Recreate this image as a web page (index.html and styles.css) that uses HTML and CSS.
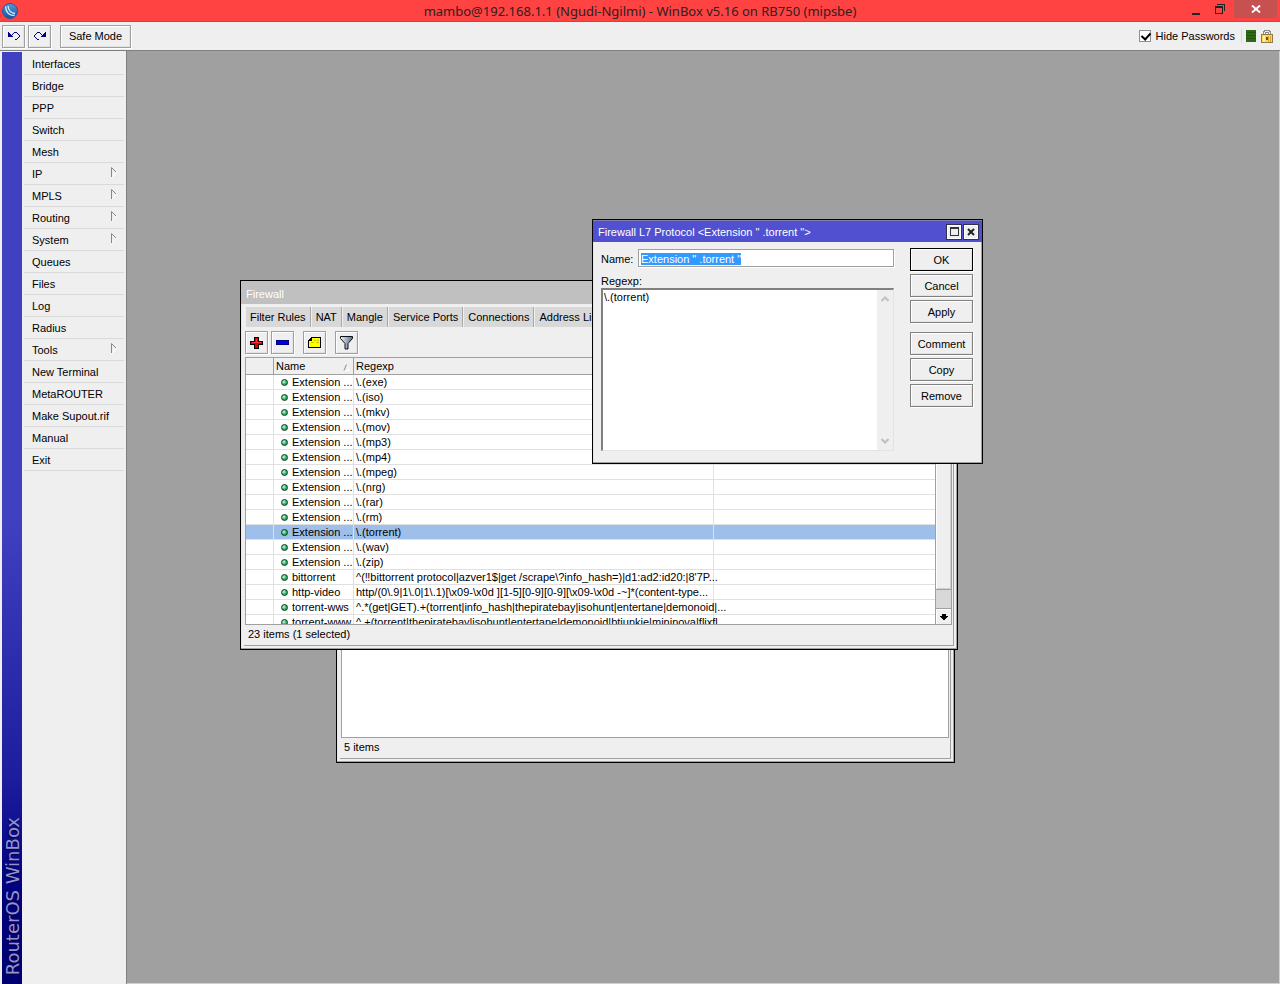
FILE: index.html
```html
<!DOCTYPE html>
<html lang="en">
<head>
<meta charset="utf-8">
<title>WinBox</title>
<link rel="stylesheet" href="styles.css">
<script src="app.js" defer></script>
</head>
<body>
<header class="titlebar">
  <svg class="logo" width="16" height="16" viewBox="0 0 16 16"><defs><linearGradient id="ball" x1="0" y1="0" x2="0" y2="1"><stop offset="0" stop-color="#5599dc"/><stop offset="1" stop-color="#1552a2"/></linearGradient></defs><circle cx="8" cy="8" r="7.5" fill="url(#ball)" stroke="#2b5797"/><path d="M3.500 3.500C4 9 7 12.500 12.500 12.500M6 3C6.500 7.500 9 10 13 10.500" fill="none" stroke="#d5f2ff" stroke-width="1.300"/></svg>
  <h1 class="title">mambo@192.168.1.1 (Ngudi-Ngilmi) - WinBox v5.16 on RB750 (mipsbe)</h1>
  <div class="controls">
    <button class="control" aria-label="Minimize"><svg width="10" height="12" viewBox="0 0 10 12"><path d="M1 10h8v2H1z" fill="#222"/></svg></button>
    <button class="control" aria-label="Restore"><svg width="12" height="12" viewBox="0 0 12 12" shape-rendering="crispEdges"><path d="M3 1.500h7.500V8M1 3.500h7.500v7H1.500V3" fill="none" stroke="#222"/><path d="M1 3h8v2H1z" fill="#222"/></svg></button>
    <button class="control control-close" aria-label="Close"><svg width="10" height="8" viewBox="0 0 10 8"><path d="M1 .5l8 7M9 .5l-8 7" stroke="#fff" stroke-width="1.900"/></svg></button>
  </div>
</header>
<div class="toolbar">
  <button class="btn btn-icon" aria-label="Undo"><svg width="12" height="10" viewBox="0 0 12 10" shape-rendering="crispEdges"><path d="M0 1h1v1h1v1h1v1h1V3h1V2h1V1h3v1h1v1h1v1h1v2h-1v1h-1v1H9v1H7V8h2V7h1V6h1V4h-1V3H9V2H6v1H5v1H4v1h1v1H0z" fill="#000080"/></svg></button>
  <button class="btn btn-icon" aria-label="Redo"><svg width="12" height="10" viewBox="0 0 12 10" shape-rendering="crispEdges"><path transform="matrix(-1 0 0 1 12 0)" d="M0 1h1v1h1v1h1v1h1V3h1V2h1V1h3v1h1v1h1v1h1v2h-1v1h-1v1H9v1H7V8h2V7h1V6h1V4h-1V3H9V2H6v1H5v1H4v1h1v1H0z" fill="#000080"/></svg></button>
  <button class="btn btn-safe">Safe Mode</button>
  <label class="hide-pass"><input type="checkbox" class="check" checked>Hide Passwords</label>
  <div class="indicators">
    <svg width="10" height="12" viewBox="0 0 10 12" shape-rendering="crispEdges"><path d="M0 0h10v12H0z" fill="#2d6a12"/><path d="M0 2.500h10M0 5.500h10M0 8.500h10" stroke="#225510"/></svg>
    <svg width="12" height="14" viewBox="0 0 12 14" shape-rendering="crispEdges"><path d="M2.500 6V2.500h1v-1h5v1h1V6M4.500 6V3.500h3V6" fill="none" stroke="#8d8d8d"/><path d="M.5 5.500h11v8H.5z" fill="#fbd94a" stroke="#8d7d48"/><path d="M2 7h2v6H2z" fill="#fff0a0"/><path d="M7.500 7v6M9.500 7v6" stroke="#d8a72c"/><path d="M5 8h2v3H5z" fill="#655020"/></svg>
  </div>
</div>
<div class="main">
  <aside class="brand"><span class="brand-text">RouterOS WinBox</span></aside>
  <nav class="menu">
    <a class="item" href="#">Interfaces</a>
    <a class="item" href="#">Bridge</a>
    <a class="item" href="#">PPP</a>
    <a class="item" href="#">Switch</a>
    <a class="item" href="#">Mesh</a>
    <a class="item" href="#">IP<svg class="sub" width="6" height="11" viewBox="0 0 6 11"><path d="M5 5v1L1 10" stroke="#fff" fill="none"/><path d="M.5 10V.5L5 5" stroke="#888" fill="none"/></svg></a>
    <a class="item" href="#">MPLS<svg class="sub" width="6" height="11" viewBox="0 0 6 11"><path d="M5 5v1L1 10" stroke="#fff" fill="none"/><path d="M.5 10V.5L5 5" stroke="#888" fill="none"/></svg></a>
    <a class="item" href="#">Routing<svg class="sub" width="6" height="11" viewBox="0 0 6 11"><path d="M5 5v1L1 10" stroke="#fff" fill="none"/><path d="M.5 10V.5L5 5" stroke="#888" fill="none"/></svg></a>
    <a class="item" href="#">System<svg class="sub" width="6" height="11" viewBox="0 0 6 11"><path d="M5 5v1L1 10" stroke="#fff" fill="none"/><path d="M.5 10V.5L5 5" stroke="#888" fill="none"/></svg></a>
    <a class="item" href="#">Queues</a>
    <a class="item" href="#">Files</a>
    <a class="item" href="#">Log</a>
    <a class="item" href="#">Radius</a>
    <a class="item" href="#">Tools<svg class="sub" width="6" height="11" viewBox="0 0 6 11"><path d="M5 5v1L1 10" stroke="#fff" fill="none"/><path d="M.5 10V.5L5 5" stroke="#888" fill="none"/></svg></a>
    <a class="item" href="#">New Terminal</a>
    <a class="item" href="#">MetaROUTER</a>
    <a class="item" href="#">Make Supout.rif</a>
    <a class="item" href="#">Manual</a>
    <a class="item" href="#">Exit</a>
  </nav>
  <main class="desktop">
    <section class="window win-back">
      <div class="frame">
        <div class="back-list"></div>
        <div class="status">5 items</div>
      </div>
    </section>

    <section class="window win-firewall">
      <h2 class="caption caption-idle">Firewall</h2>
      <div class="frame">
        <div class="tabs">
          <button class="tab">Filter Rules</button><button class="tab">NAT</button><button class="tab">Mangle</button><button class="tab">Service Ports</button><button class="tab">Connections</button><button class="tab">Address Lists</button>
        </div>
        <div class="tools">
          <button class="btn btn-icon" aria-label="Add"><svg width="13" height="12" viewBox="0 0 13 12" shape-rendering="crispEdges"><path d="M4.500.5h4v4h4v3h-4v4h-4v-4h-4v-3h4z" fill="#e00000" stroke="#000"/><path d="M6 2h1v3h4v1H2V5h4z" fill="#ff3030"/></svg></button>
          <button class="btn btn-icon" aria-label="Remove entry"><svg width="13" height="5" viewBox="0 0 13 5" shape-rendering="crispEdges"><path d="M.5.5h12v4H.5z" fill="#0000f0" stroke="#000080"/></svg></button>
          <button class="btn btn-icon gap-left" aria-label="Comment entry"><svg width="13" height="11" viewBox="0 0 13 11" shape-rendering="crispEdges"><path d="M3.500.5h9v10H.5v-7h3z" fill="#ffff00" stroke="#000"/><path d="M0 3h1V2h1V1h1V0h1v4H0z" fill="#000"/><path d="M6 3.500h2M9 3.500h2M3 5.500h3M8 5.500h3" stroke="#c8c800"/></svg></button>
          <button class="btn btn-icon gap-left" aria-label="Filter"><svg width="13" height="14" viewBox="0 0 13 14"><defs><linearGradient id="fun"><stop offset="0" stop-color="#eef5ff"/><stop offset="1" stop-color="#51678a"/></linearGradient></defs><path d="M.5.5h12v2L8 7.500v5.500H5V7.500L.5 2.500z" fill="url(#fun)" stroke="#111"/></svg></button>
        </div>
        <div class="grid">
          <div class="grid-view">
            <table class="rules">
              <colgroup><col class="c-flag"><col class="c-name"><col class="c-regexp"><col></colgroup>
              <thead><tr><th></th><th>Name<svg class="sort" width="7" height="7" viewBox="0 0 7 7"><path d="M3 .5L6 6.500H1" stroke="#fff" fill="none"/><path d="M1 6.500L3.500.5" stroke="#888" fill="none"/></svg></th><th>Regexp</th><th></th></tr></thead>
              <tbody>
                <tr><td></td><td><i class="dot"></i>Extension ...</td><td>\.(exe)</td><td></td></tr>
                <tr><td></td><td><i class="dot"></i>Extension ...</td><td>\.(iso)</td><td></td></tr>
                <tr><td></td><td><i class="dot"></i>Extension ...</td><td>\.(mkv)</td><td></td></tr>
                <tr><td></td><td><i class="dot"></i>Extension ...</td><td>\.(mov)</td><td></td></tr>
                <tr><td></td><td><i class="dot"></i>Extension ...</td><td>\.(mp3)</td><td></td></tr>
                <tr><td></td><td><i class="dot"></i>Extension ...</td><td>\.(mp4)</td><td></td></tr>
                <tr><td></td><td><i class="dot"></i>Extension ...</td><td>\.(mpeg)</td><td></td></tr>
                <tr><td></td><td><i class="dot"></i>Extension ...</td><td>\.(nrg)</td><td></td></tr>
                <tr><td></td><td><i class="dot"></i>Extension ...</td><td>\.(rar)</td><td></td></tr>
                <tr><td></td><td><i class="dot"></i>Extension ...</td><td>\.(rm)</td><td></td></tr>
                <tr class="selected"><td></td><td><i class="dot"></i>Extension ...</td><td>\.(torrent)</td><td></td></tr>
                <tr><td></td><td><i class="dot"></i>Extension ...</td><td>\.(wav)</td><td></td></tr>
                <tr><td></td><td><i class="dot"></i>Extension ...</td><td>\.(zip)</td><td></td></tr>
                <tr><td></td><td><i class="dot"></i>bittorrent</td><td>^(‼bittorrent protocol|azver1$|get /scrape\?info_hash=)|d1:ad2:id20:|8'7P...</td><td></td></tr>
                <tr><td></td><td><i class="dot"></i>http-video</td><td>http/(0\.9|1\.0|1\.1)[\x09-\x0d ][1-5][0-9][0-9][\x09-\x0d -~]*(content-type...</td><td></td></tr>
                <tr><td></td><td><i class="dot"></i>torrent-wws</td><td>^.*(get|GET).+(torrent|info_hash|thepiratebay|isohunt|entertane|demonoid|...</td><td></td></tr>
                <tr><td></td><td><i class="dot"></i>torrent-www</td><td>^.+(torrent|thepiratebay|isohunt|entertane|demonoid|btjunkie|mininova|flixfl</td><td></td></tr>
              </tbody>
            </table>
          </div>
          <div class="scroll">
            <div class="thumb"></div>
            <div class="track"></div>
            <button class="arrow" aria-label="Scroll down"><svg width="8" height="6" viewBox="0 0 8 6" shape-rendering="crispEdges"><path d="M2 0h4v2h2v1H7v1H6v1H5v1H3V5H2V4H1V3H0V2h2z"/></svg></button>
          </div>
        </div>
        <div class="status">23 items (1 selected)</div>
      </div>
    </section>

    <section class="window win-dialog">
      <div class="caption caption-active">
        <h2 class="caption-text">Firewall L7 Protocol &lt;Extension " .torrent "&gt;</h2>
        <button class="cap-btn" aria-label="Maximize dialog"><svg width="9" height="9" viewBox="0 0 9 9" shape-rendering="crispEdges"><path d="M.5.5h8v8h-8zM0 1.500h9" fill="none" stroke="#333"/></svg></button>
        <button class="cap-btn" aria-label="Close dialog"><svg width="8" height="8" viewBox="0 0 8 8"><path d="M1 1l6 6M7 1L1 7" stroke="#222" stroke-width="2"/></svg></button>
      </div>
      <form class="dialog">
        <div class="fields">
          <div class="name-row"><label class="name-label" for="name">Name:</label><input id="name" class="text" type="text" value='Extension " .torrent "'></div>
          <label class="regexp-label" for="regexp">Regexp:</label>
          <div class="area-box">
            <textarea id="regexp" class="area">\.(torrent)</textarea>
            <div class="area-scroll">
              <svg width="8" height="6" viewBox="0 0 8 6"><path d="M.5 5L4 1.500 7.500 5" fill="none" stroke="#c0c0c0" stroke-width="2"/></svg>
              <svg width="8" height="6" viewBox="0 0 8 6"><path d="M.5 1L4 4.500 7.500 1" fill="none" stroke="#c0c0c0" stroke-width="2"/></svg>
            </div>
          </div>
        </div>
        <div class="actions">
          <button type="button" class="btn action default">OK</button>
          <button type="button" class="btn action">Cancel</button>
          <button type="button" class="btn action">Apply</button>
          <button type="button" class="btn action second">Comment</button>
          <button type="button" class="btn action">Copy</button>
          <button type="button" class="btn action">Remove</button>
        </div>
      </form>
    </section>
  </main>
</div>
</body>
</html>
```

FILE: styles.css
```css
* { box-sizing: border-box; }
body {
  margin: 0;
  height: 100vh;
  display: flex;
  flex-direction: column;
  overflow: hidden;
  background: #efefef;
  color: #000;
  font: 11px/14px "Liberation Sans", Arial, sans-serif;
}
button, input, textarea { font: inherit; color: inherit; margin: 0; }
button { padding: 0; border: 0; background: none; display: flex; align-items: center; justify-content: center; }
h1, h2 { margin: 0; font-weight: normal; font-size: inherit; }
svg { display: block; flex: none; }

.titlebar {
  display: grid;
  grid-template-columns: 1fr auto 1fr;
  height: 22px;
  flex: none;
  background: #ff4343;
  border-bottom: 1px solid #e03a3a;
}
.logo { margin: 3px 2px; }
.title { font: 13px/22px "Noto Sans", "Open Sans", sans-serif; color: #2c2020; white-space: nowrap; }
.controls { display: flex; justify-content: flex-end; padding-right: 3px; }
.control { width: 24px; height: 18px; }
.control-close { width: 43px; background: #c75050; margin-left: 2px; }

.toolbar {
  display: flex;
  align-items: center;
  height: 29px;
  flex: none;
  padding: 0 7px 0 2px;
  border-bottom: 1px solid #808080;
}
.btn {
  height: 23px;
  border: 1px solid #a0a0a0;
  background: #efefef;
  box-shadow: 1px 1px #fff, inset 1px 1px #fff, inset -1px -1px #e3e3e3;
}
.btn-icon { width: 23px; margin-right: 3px; }
.btn-safe { width: 71px; margin-left: 6px; }
.hide-pass { display: flex; align-items: center; gap: 5px; margin-left: auto; }
.check {
  appearance: none;
  width: 12px;
  height: 12px;
  margin: 0;
  border: 1px solid #909090;
  background: #fff;
}
.check:checked::before {
  content: "";
  display: block;
  width: 4px;
  height: 7px;
  margin: 0 0 0 3px;
  border: solid #000;
  border-width: 0 2px 2px 0;
  transform: rotate(42deg);
}
.indicators { display: flex; align-items: center; gap: 5px; margin-left: 6px; padding-left: 4px; border-left: 1px solid #d8d8d8; }

.main { flex: 1; display: flex; min-height: 0; }
.brand {
  width: 20px;
  margin: 1px 0 0 2px;
  display: flex;
  align-items: flex-end;
  justify-content: flex-end;
  padding-bottom: 9px;
  background: linear-gradient(#4040c0 50%, #1c1c9c 78%, #000080 90%, #000070);
}
.brand-text {
  writing-mode: vertical-rl;
  transform: rotate(180deg);
  font: 18px/18px "DejaVu Sans", sans-serif;
  color: #9494c8;
  white-space: nowrap;
  text-shadow: -1px -1px 1px #000040;
}
.menu { width: 105px; padding: 2px 2px 0; border-right: 1px solid #808080; }
.item {
  display: flex;
  align-items: center;
  height: 22px;
  padding: 0 7px 0 8px;
  border-bottom: 1px solid #d9d9d9;
  color: #000;
  text-decoration: none;
}
.sub { margin: 0 0 2px auto; }
.desktop {
  flex: 1;
  position: relative;
  background: #a0a0a0;
  border: solid #d0d0d0;
  border-width: 0 1px 1px 0;
}

.window {
  position: absolute;
  display: flex;
  flex-direction: column;
  border: 1px solid #000;
  background: #efefef;
  box-shadow: inset -1px -1px #a0a0a0, inset 1px 1px #e8e8e8;
}
.win-back { left: 209px; top: 560px; width: 619px; height: 152px; }
.win-firewall { left: 113px; top: 229px; width: 718px; height: 370px; }
.win-dialog { left: 465px; top: 168px; width: 391px; height: 245px; }
.caption { flex: none; padding-left: 5px; line-height: 26px; color: #fff; }
.caption-idle { height: 23px; background: #c0c0c0; }
.caption-active { display: flex; align-items: center; gap: 3px; height: 22px; padding-right: 4px; background: #5050d0; border-top: 1px solid #8080a8; }
.caption-text { flex: 1; }
.cap-btn { width: 14px; height: 14px; background: #efefef; outline: 1px solid #303050; box-shadow: inset 0 0 0 1px #fff; }
.frame {
  flex: 1;
  min-height: 0;
  display: flex;
  flex-direction: column;
  margin: 0 3px 3px;
  padding: 0 1px;
  border: solid #a0a0a0;
  border-width: 0 1px 1px 0;
}
.back-list { flex: 1; background: #fff; border: 1px solid #a0a0a0; }
.status { height: 20px; padding: 2px 3px; flex: none; }

.tabs { display: flex; gap: 1px; height: 20px; margin: 3px 0 4px 1px; flex: none; }
.tab { padding: 2px 4px; background: #d8d8d8; border-right: 1px solid #a8a8a8; white-space: nowrap; }
.tools { display: flex; height: 26px; flex: none; }
.gap-left { margin-left: 6px; }
.grid { flex: 1; min-height: 0; display: flex; border: 1px solid #a0a0a0; }
.grid-view { flex: 1; min-width: 0; overflow: hidden; background: #fff; }
.rules { width: 100%; table-layout: fixed; border-collapse: separate; border-spacing: 0; }
.c-flag { width: 28px; }
.c-name { width: 80px; }
.c-regexp { width: 360px; }
.rules th, .rules td { padding: 0 0 0 2px; text-align: left; font-weight: normal; white-space: nowrap; }
.rules th { height: 17px; background: #efefef; border-right: 1px solid #a0a0a0; border-bottom: 1px solid #a0a0a0; }
.rules th:last-child, .rules td:last-child { border-right: 0; }
.rules td { height: 15px; line-height: 14px; border-right: 1px solid #e0e0e0; border-bottom: 1px solid #e0e0e0; }
.selected { background: #9ebfea; }
.sort { float: right; margin: 5px 3px 0 0; }
.dot {
  display: inline-block;
  width: 7px;
  height: 7px;
  margin: 0 4px 0 5px;
  border: 1px solid #103820;
  border-radius: 50%;
  background: radial-gradient(circle at 35% 35%, #c0ffd8, #28a860 60%);
}
.scroll { width: 16px; display: flex; flex-direction: column; border-left: 1px solid #a0a0a0; background: #d8d8d8; }
.thumb { flex: 1; background: #efefef; border-bottom: 1px solid #a0a0a0; box-shadow: inset 1px 1px #fff, inset -1px -1px #d0d0d0; }
.track { height: 18px; }
.arrow { height: 16px; background: #efefef; border-top: 1px solid #a0a0a0; box-shadow: inset 1px 1px #fff; }

.dialog { flex: 1; display: flex; gap: 16px; padding: 6px 9px 12px 8px; }
.fields { flex: 1; display: flex; flex-direction: column; }
.name-row { display: flex; align-items: center; height: 20px; }
.name-label { width: 37px; padding-top: 2px; }
.text { flex: 1; min-width: 0; height: 18px; padding: 1px 2px 0; border: 1px solid #a0a0a0; background: #fff; outline: 0; box-shadow: 1px 1px #fff; }
.text::selection { background: #3399ff; color: #fff; }
.regexp-label { margin-top: 6px; height: 14px; }
.area-box { flex: 1; display: flex; border: 1px solid #e3e3e3; border-top: 2px solid #808080; border-left: 2px solid #808080; background: #fff; }
.area { flex: 1; min-width: 0; padding: 0 1px; border: 0; outline: 0; resize: none; background: #fff; overflow: hidden; }
.area-scroll { width: 16px; padding: 6px 4px; display: flex; flex-direction: column; justify-content: space-between; background: #efefef; }
.actions { width: 63px; display: flex; flex-direction: column; gap: 3px; }
.action { border-color: #808080; }
.default { border-color: #000; }
.second { margin-top: 6px; }
```

FILE: app.js
```js
const nameField = document.getElementById("name");
nameField.focus();
nameField.select();
```
